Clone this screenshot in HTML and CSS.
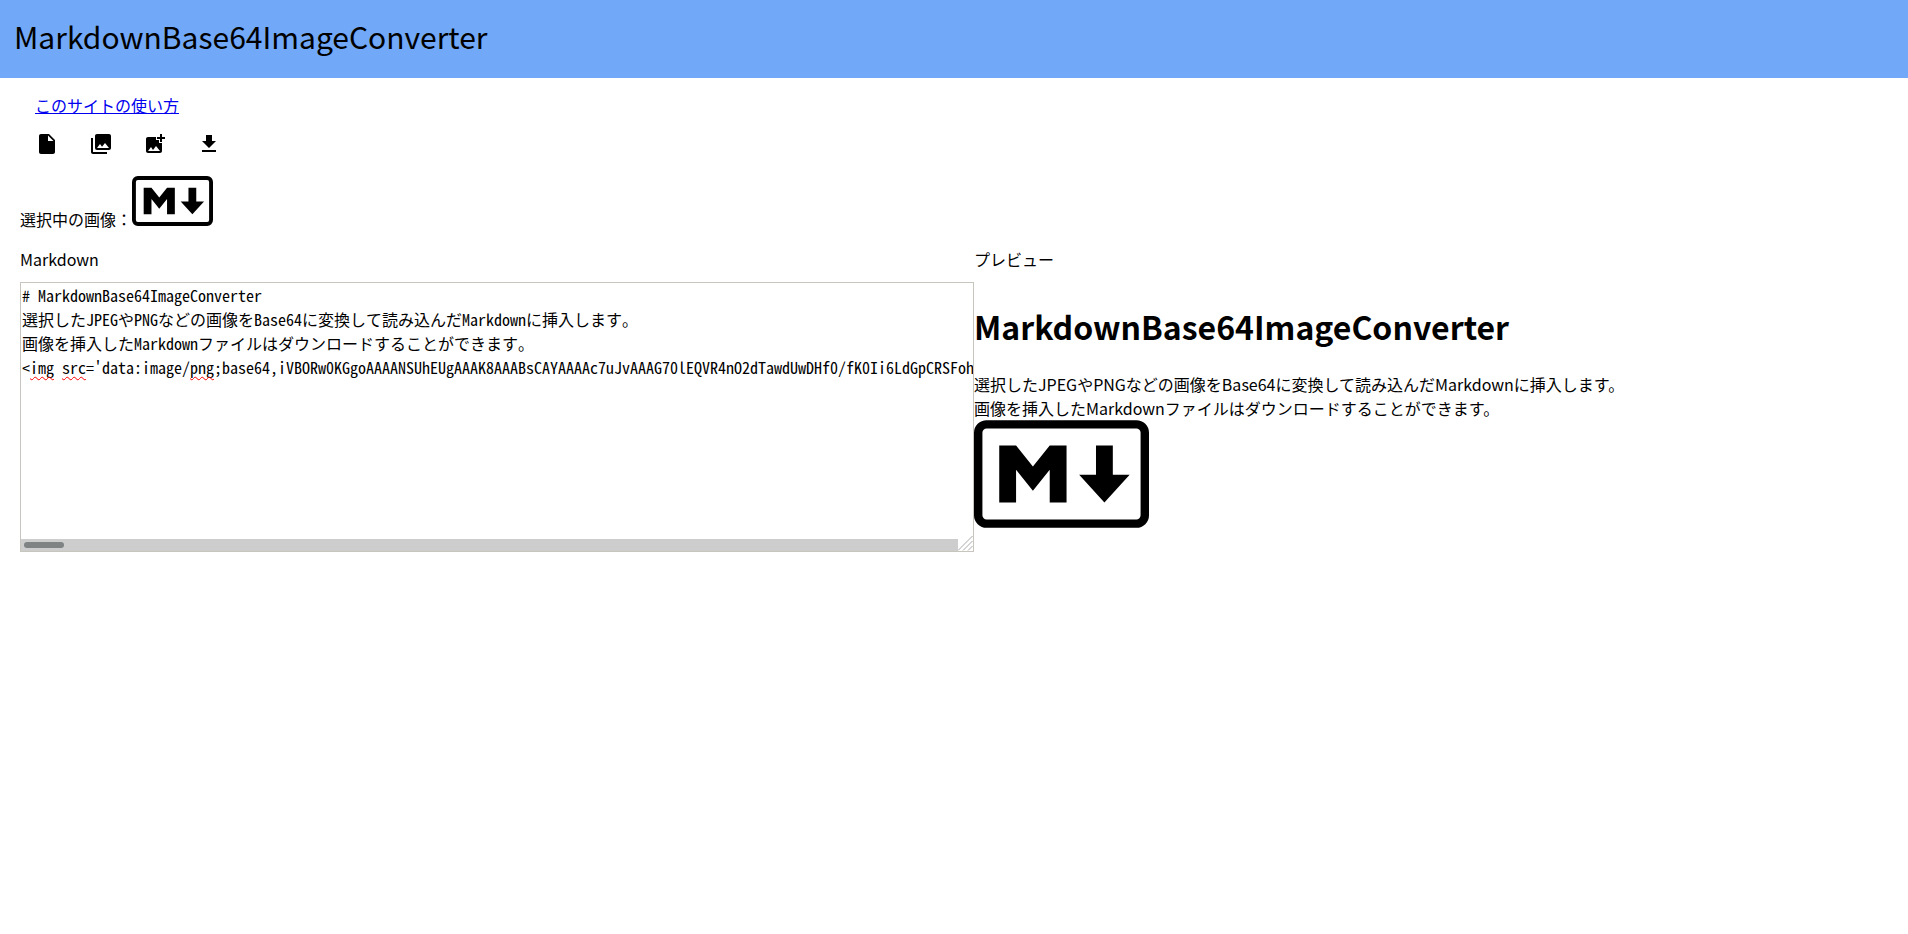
FILE: index.html
```html
<!DOCTYPE html>
<html lang="ja">
<head>
<meta charset="utf-8">
<title>MarkdownBase64ImageConverter</title>
<link rel="stylesheet" href="styles.css">
</head>
<body>
<svg class="defs" aria-hidden="true">
  <symbol id="mark" viewBox="0 0 208 128">
    <rect x="5" y="5" width="198" height="118" rx="10" fill="#fff" stroke="#000" stroke-width="10"/>
    <path d="M30 98V30h20l20 25 20-25h20v68H90V59L70 84 50 59v39zm125 0l-30-33h20V30h20v35h20z"/>
  </symbol>
</svg>
<header class="header">MarkdownBase64ImageConverter</header>
<main class="main">
  <nav class="help"><a href="#">このサイトの使い方</a></nav>
  <div class="toolbar">
    <button class="tool" type="button" aria-label="ファイルを開く"><svg viewBox="0 0 24 24"><path d="M6 2c-1.100 0-1.990.9-1.990 2L4 20c0 1.100.89 2 1.990 2H18c1.100 0 2-.9 2-2V8l-6-6H6zm7 7V3.500L18.500 9H13z"/></svg></button>
    <button class="tool" type="button" aria-label="画像を選択"><svg viewBox="0 0 24 24"><path d="M22 16V4c0-1.100-.9-2-2-2H8c-1.100 0-2 .9-2 2v12c0 1.100.9 2 2 2h12c1.100 0 2-.9 2-2zm-11-4l2.030 2.710L16 11l4 5H8l3-4zM2 6v14c0 1.100.9 2 2 2h14v-2H4V6H2z"/></svg></button>
    <button class="tool" type="button" aria-label="画像を挿入"><svg viewBox="0 0 24 24"><path d="M19 7v2.990s-1.990.01-2 0V7h-3s.01-1.990 0-2h3V2h2v3h3v2h-3zm-3 4V8h-3V5H5c-1.100 0-2 .9-2 2v12c0 1.100.9 2 2 2h12c1.100 0 2-.9 2-2v-8h-3zM5 19l3-4 2 3 3-4 4 5H5z"/></svg></button>
    <button class="tool" type="button" aria-label="ダウンロード"><svg viewBox="0 0 24 24"><path d="M19 9h-4V3H9v6H5l7 7 7-7zM5 18v2h14v-2H5z"/></svg></button>
  </div>
  <div class="selected"><span>選択中の画像：</span><svg class="thumb" role="img" aria-label="選択中の画像"><use href="#mark"/></svg></div>
  <div class="panes">
    <section class="pane">
      <label class="label" for="source">Markdown</label>
      <div class="editor">
        <textarea class="source" id="source" wrap="off" spellcheck="false">
# MarkdownBase64ImageConverter
選択したJPEGやPNGなどの画像をBase64に変換して読み込んだMarkdownに挿入します。
画像を挿入したMarkdownファイルはダウンロードすることができます。
&lt;img src='data:image/png;base64,iVBORw0KGgoAAAANSUhEUgAAAK8AAABsCAYAAAAc7uJvAAAG70lEQVR4nO2dTawdUwDHf0/fK0Ii6LdGpCRSFoh</textarea>
        <span class="typo typo-img"></span>
        <span class="typo typo-src"></span>
        <span class="typo typo-png"></span>
        <div class="scroll">
          <div class="track"><div class="grip"></div></div>
          <svg class="resizer" viewBox="0 0 15 15"><path d="M0 14.500L14.500 0M5 14.500L14.500 5M10 14.500L14.500 10"/></svg>
        </div>
      </div>
    </section>
    <section class="pane">
      <div class="label">プレビュー</div>
      <article class="preview">
        <h1>MarkdownBase64ImageConverter</h1>
        <p>選択したJPEGやPNGなどの画像をBase64に変換して読み込んだMarkdownに挿入します。<br>画像を挿入したMarkdownファイルはダウンロードすることができます。</p>
        <svg class="picture" role="img" aria-label="Markdown"><use href="#mark"/></svg>
      </article>
    </section>
  </div>
</main>
</body>
</html>
```
FILE: styles.css
```css
* { box-sizing: border-box; }
body {
  margin: 0;
  background: #fff;
  color: #000;
  font: 16px/24px "Noto Sans CJK JP", sans-serif;
}
.defs { position: absolute; width: 0; height: 0; }
.header {
  padding: 12px 14px 18px;
  background: #71a8f7;
  font-size: 30px;
  line-height: 48px;
}
.main { padding: 15px 0 0 20px; }
.help { padding-left: 15px; }
.toolbar {
  display: flex;
  gap: 30px;
  padding: 15px 15px 20px;
}
.tool {
  width: 24px;
  height: 24px;
  padding: 0;
  border: 0;
  background: none;
}
.tool svg { display: block; width: 24px; height: 24px; }
.selected { display: flex; align-items: flex-end; }
.selected span { line-height: 14px; }
.thumb { width: 81px; height: 50px; }
.panes { display: grid; grid-template-columns: 50vw 1fr; }
.pane { min-width: 0; }
.label { display: block; padding: 21px 0 11px; }
.editor {
  position: relative;
  border: 1px solid #c8c5bf;
}
.source {
  display: block;
  width: 100%;
  height: 256px;
  padding: 0 1px;
  border: 0;
  outline: 0;
  resize: none;
  overflow: hidden;
  background: #fff;
  color: #000;
  font: 16px/24px "Noto Sans Mono CJK JP", "Noto Sans CJK JP", monospace;
}
.typo {
  position: absolute;
  top: 92px;
  width: 24px;
  overflow: hidden;
  height: 6px;
}
.typo::before {
  content: "\a0\a0\a0\a0\a0\a0\a0\a0";
  display: block;
  margin-top: -15px;
  line-height: 16px;
  text-decoration: underline wavy #f00 1px;
}
.typo-img { left: 9px; }
.typo-src { left: 41px; }
.typo-png { left: 169px; }
.scroll { display: flex; height: 12px; }
.track { flex: 1; padding: 3px; background: #cdcdcd; }
.grip { width: 40px; height: 6px; border-radius: 3px; background: #7f8383; }
.resizer {
  width: 15px;
  height: 15px;
  margin-top: -3px;
  fill: none;
  stroke: #a8a8a8;
  stroke-width: 1;
}
.preview h1 { margin: 20px 0 22px; font-size: 32px; line-height: 48px; }
.preview p { margin: 0; }
.picture { display: block; width: 175px; height: 108px; }
```
